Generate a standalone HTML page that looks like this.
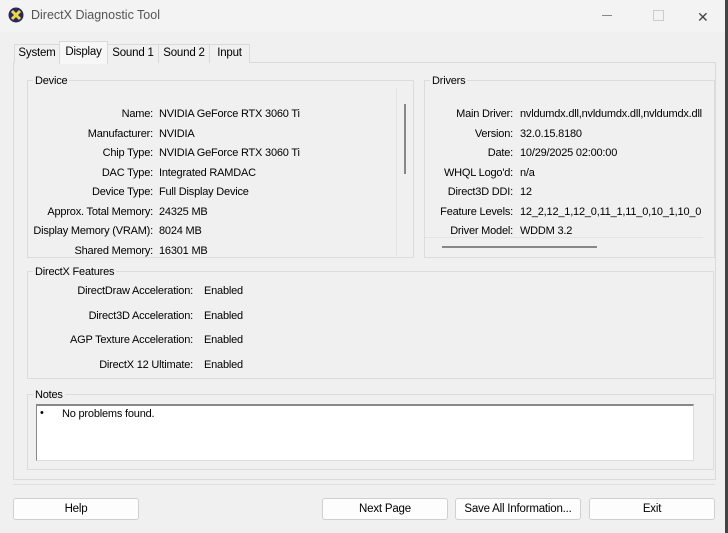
<!DOCTYPE html><html><head><style>
body{margin:0;width:728px;height:533px;background:#f0f0f0;font-family:"Liberation Sans",sans-serif;font-size:11px;letter-spacing:-0.2px;color:#000;position:relative;overflow:hidden}
.a{position:absolute}
.title{left:0;top:0;width:728px;height:32px;background:#f3f3f3}
.gb{position:absolute;border:1px solid #dcdcdc;}
.gl{position:absolute;background:#f0f0f0;padding:0 2px;top:-6px;left:5px}
.r{position:absolute;text-align:right;white-space:nowrap}
.v{position:absolute;white-space:nowrap}
.btn{position:absolute;top:498px;height:20px;border:1px solid #d0d0d0;background:#fdfdfd;border-radius:3px;text-align:center;line-height:20px;font-size:11.5px}
.tab{position:absolute;top:44px;height:18px;border:1px solid #dadada;border-bottom:none;background:#f0f0f0;line-height:17px;text-align:center;font-size:11.5px}
</style></head><body>
<div class="a title"></div>
<svg class="a" style="left:8px;top:7px" width="16" height="16" viewBox="0 0 16 16"><circle cx="8" cy="8" r="7.5" fill="#2c2858"/><path d="M4 4L12 12M12 4L4 12" stroke="#e8d84a" stroke-width="3"/></svg>
<div class="a" style="left:31px;top:8px;font-size:12.5px;color:#555;letter-spacing:0">DirectX Diagnostic Tool</div>
<div class="a" style="left:602px;top:15px;width:10px;height:1px;background:#888"></div>
<div class="a" style="left:653px;top:10px;width:9px;height:9px;border:1px solid #ccc"></div>
<div class="a" style="left:697px;top:9px;font-size:14px;color:#444">✕</div>
<div class="a" style="left:725px;top:0;width:3px;height:533px;background:#444"></div>
<div class="a" style="left:13px;top:62px;width:701px;height:416px;border:1px solid #dadada;background:#f0f0f0"></div>
<div class="tab" style="left:14px;width:44px">System</div>
<div class="tab" style="left:59px;top:41px;height:22px;width:47px;background:#f7f7f7;line-height:21px">Display</div>
<div class="tab" style="left:107px;width:50px">Sound 1</div>
<div class="tab" style="left:158px;width:50px">Sound 2</div>
<div class="tab" style="left:209px;width:39px">Input</div>

<div class="gb" style="left:27px;top:80px;width:385px;height:176px"><div class="gl">Device</div></div>
<div class="a" style="left:396px;top:88px;width:1px;height:168px;background:#e4e4e4"></div>
<div class="a" style="left:404px;top:104px;width:2px;height:70px;background:#888"></div>
<div class="gb" style="left:424px;top:80px;width:289px;height:176px"><div class="gl">Drivers</div></div>
<div class="a" style="left:425px;top:237px;width:278px;height:1px;background:#e4e4e4"></div>
<div class="a" style="left:442px;top:246px;width:155px;height:2px;background:#888"></div>

<div class="r" style="right:575px;top:105px;line-height:19.5px">Name:<br>Manufacturer:<br>Chip Type:<br>DAC Type:<br>Device Type:<br>Approx. Total Memory:<br>Display Memory (VRAM):<br>Shared Memory:</div>
<div class="v" style="left:159px;top:105px;line-height:19.5px">NVIDIA GeForce RTX 3060 Ti<br>NVIDIA<br>NVIDIA GeForce RTX 3060 Ti<br>Integrated RAMDAC<br>Full Display Device<br>24325 MB<br>8024 MB<br>16301 MB</div>

<div class="r" style="right:215px;top:105px;line-height:19.5px">Main Driver:<br>Version:<br>Date:<br>WHQL Logo'd:<br>Direct3D DDI:<br>Feature Levels:<br>Driver Model:</div>
<div class="v" style="left:520px;top:105px;line-height:19.5px;width:183px;overflow:hidden">nvldumdx.dll,nvldumdx.dll,nvldumdx.dll<br>32.0.15.8180<br>10/29/2025 02:00:00<br>n/a<br>12<br>12_2,12_1,12_0,11_1,11_0,10_1,10_0<br>WDDM 3.2</div>

<div class="gb" style="left:27px;top:271px;width:685px;height:106px"><div class="gl">DirectX Features</div></div>
<div class="r" style="right:535px;top:279px;line-height:24.6px">DirectDraw Acceleration:<br>Direct3D Acceleration:<br>AGP Texture Acceleration:<br>DirectX 12 Ultimate:</div>
<div class="v" style="left:204px;top:279px;line-height:24.6px">Enabled<br>Enabled<br>Enabled<br>Enabled</div>

<div class="gb" style="left:27px;top:394px;width:685px;height:74px"><div class="gl">Notes</div></div>
<div class="a" style="left:36px;top:404px;width:656px;height:54px;background:#fff;border-top:2px solid #888;border-left:1px solid #888;border-right:1px solid #ddd;border-bottom:1px solid #ddd"></div>
<div class="a" style="left:40px;top:407px">•</div>
<div class="a" style="left:62px;top:408px">No problems found.</div>

<div class="a" style="left:13px;top:484px;width:702px;height:1px;background:#e0e0e0"></div>
<div class="btn" style="left:13px;width:124px">Help</div>
<div class="btn" style="left:322px;width:124px">Next Page</div>
<div class="btn" style="left:455px;width:124px">Save All Information...</div>
<div class="btn" style="left:589px;width:124px">Exit</div>
</body></html>
